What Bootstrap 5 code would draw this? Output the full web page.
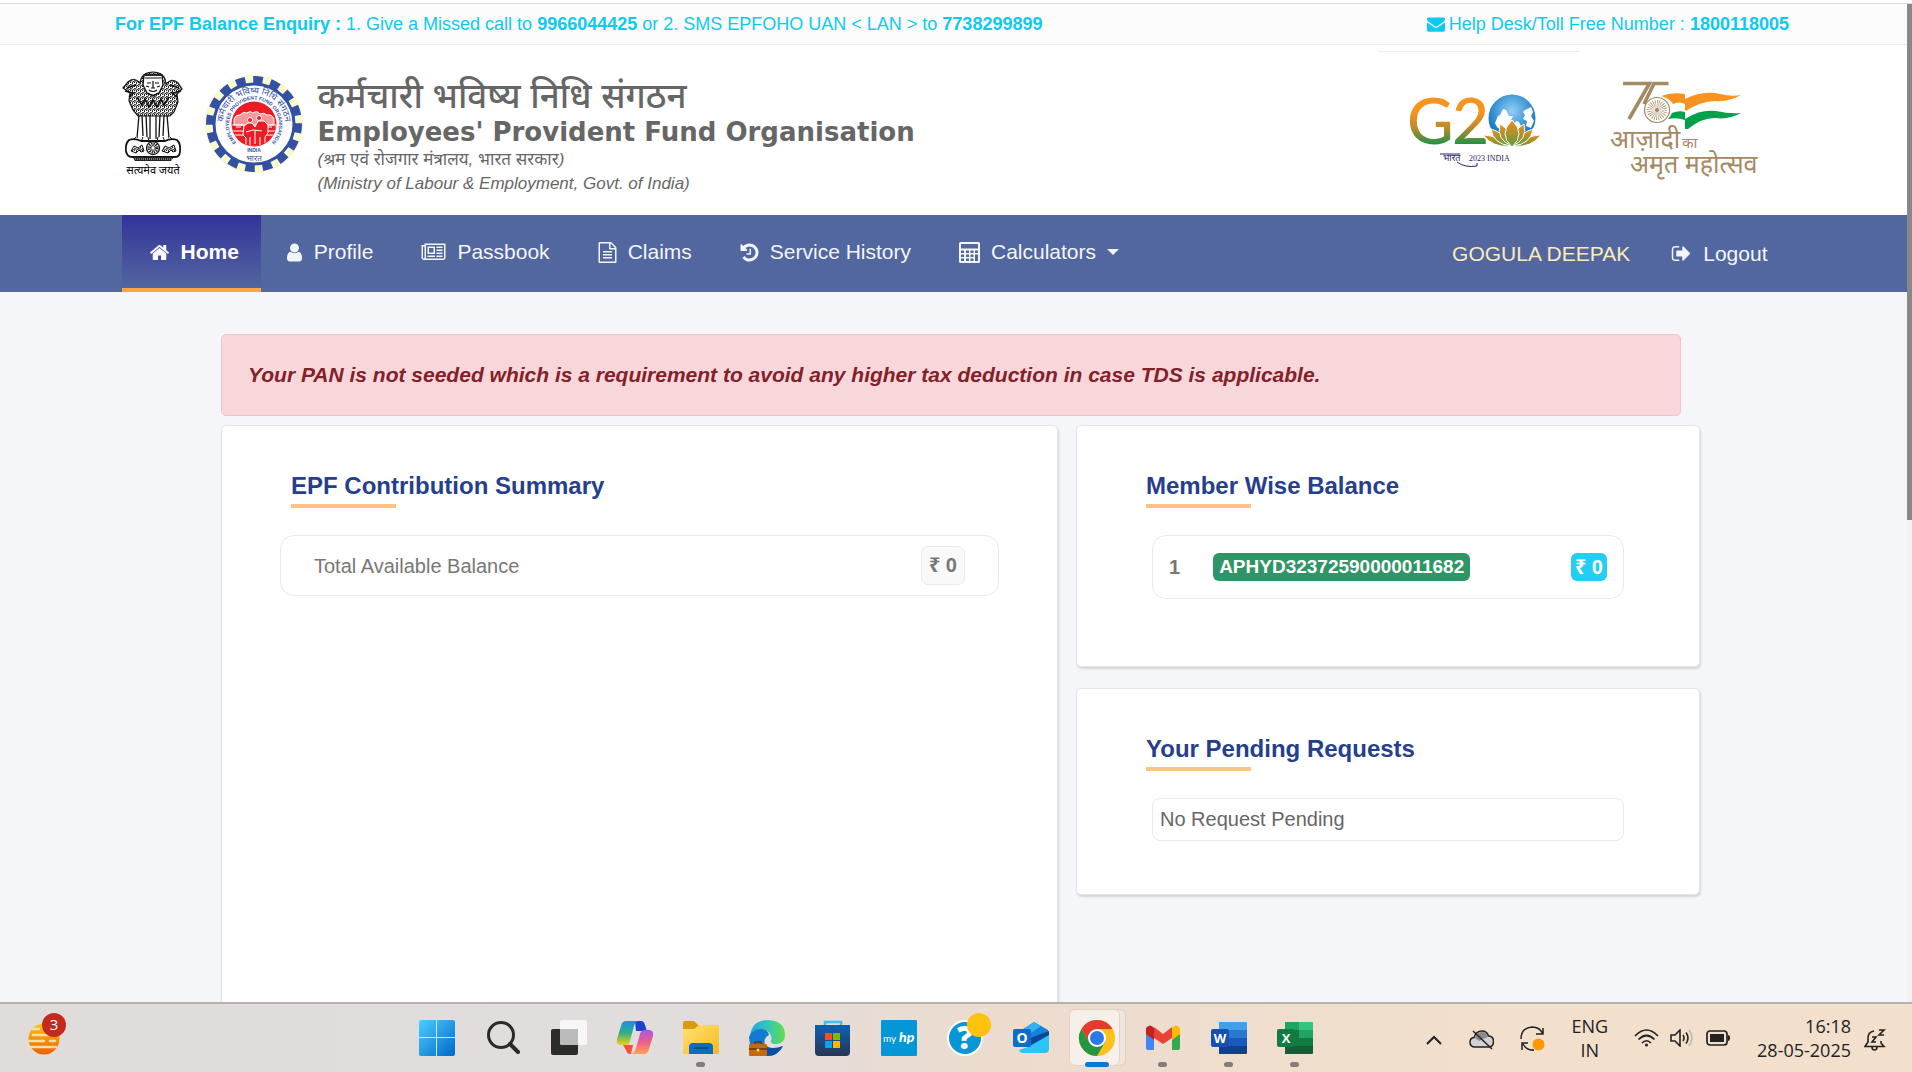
<!DOCTYPE html>
<html lang="en">
<head>
<meta charset="utf-8">
<meta name="viewport" content="width=device-width, initial-scale=1">
<title>EPFO Member Passbook</title>
<link href="https://cdn.jsdelivr.net/npm/bootstrap@5.3.0/dist/css/bootstrap.min.css" rel="stylesheet">
<style>
:root{--ui:"Liberation Sans","Noto Sans",sans-serif}
body{font-family:var(--ui);font-size:20px;color:#666;background:#fff;height:100vh;overflow:hidden}
a{text-decoration:none}
.viewport-area{border-top:1px solid #dcdcdc;margin-top:3px;min-height:0}
.page-body{background:#f5f6fa;min-width:0;overflow:hidden}
.scroll-track{width:5px;background:#f1f1f1;flex:none}
.scroll-thumb{height:516px;background:#888}
.wrap-top{max-width:1677px;padding-right:3px}
.wrap-main{max-width:1664px}
.wrap-cards{max-width:1495px;padding:42px 1px 0 15px}
.strip{background:#fcfcfc;border-bottom:1px solid #ececec;color:#0dcaf0;font-size:18px;line-height:24px;padding:8px 0}
.site-head{background:#fff;height:170px}
.emblem{margin-top:26px}
.gear-logo{margin:30px 15px 0 21px}
.head-titles{padding-top:31px}
.t-hi{font-size:35px;line-height:40px;color:#666;font-weight:500}
.t-en{font-family:"DejaVu Sans",var(--ui);font-weight:700;font-size:26px;line-height:32px;color:#666}
.t-sub{font-size:17px;line-height:24px;font-style:oblique 14deg;color:#666}
.g20-box{width:202px;border-top:1px solid #eee;margin-top:6px;padding:40px 0 0 31px}
.akam-box{width:206px;padding:34px 0 0 28px}
.main-nav{background:#5266a0;font-size:21px}
.main-nav .nav-link{color:#f4f5f9;padding:21px 24px 20px;border-bottom:4px solid transparent;line-height:32px;display:flex;align-items:center;gap:11px}
.main-nav .nav-link.active{color:#fff;font-weight:700;background:linear-gradient(#33339a,#5266a0);border-bottom-color:#fda63f;padding-left:27px;padding-right:22px;margin-right:1px}
.main-nav .nav-link.log-out{padding:0 18px 0 41px;border:0}
.main-nav .dropdown-toggle::after{margin-left:0}
.main-nav svg{fill:currentColor;flex:none}
.user-name{color:#fdebb8}
.notice{font-size:21px;line-height:30px;padding:25px 26px;margin:0 19px 9px 0;color:#842029;background:#f8d7da;border-color:#f5c2c7;border-radius:5px}
.col-main{flex:837 1 0;min-width:0}
.col-side{flex:624 1 0;min-width:0}
.cards-gap{gap:18px}
.stack-gap{gap:21px}
.panel{border:1px solid #e4e5e8;border-radius:5px;box-shadow:1px 2px 2px #d4d6da;background:#fff;padding:42px 69px 0}
.panel-tall{min-height:760px}
.panel-a{min-height:242px}
.panel-b{min-height:207px}
.panel-title{font-size:24px;line-height:36px;font-weight:700;color:#263f8c;margin:0 0 27px}
.panel-title::after{content:"";display:block;width:105px;height:4px;background:#fbc386}
.box-line{border:1px solid #e9e9e9;border-radius:14px;color:#777}
.box-total{margin:0 -11px;padding:0 33px;height:61px}
.box-member{margin:0 6px;padding:0 16px;height:64px}
.box-none{margin:0 6px;padding:0 7px 2px;height:43px;border-radius:8px;color:#666}
.amt{border:1px solid #ebebeb;background:#f9f9f9;border-radius:7px;padding:4px 7px;line-height:29px;color:#777}
.chip{border-radius:6px;line-height:28px;color:#fff}
.chip-id{background:#2f9566;margin-left:33px;font-size:19px;padding:0 6px}
.chip-amt{background:#22cff4;padding:0 4px}
.taskbar{height:70px;border-top:2px solid #b7b1ad;background:linear-gradient(90deg,#e0dcdb 0,#e1dddc 36%,#ecdccf 52%,#f2dfcc 78%,#f2dfcc);color:#222;font-family:"Open Sans","Noto Sans",sans-serif;font-size:18px;line-height:24px}
.tb-left{width:calc(21% + 2px)}
.tb-btn{width:66px;height:68px;border:0;background:none;padding:0;position:relative;display:flex;align-items:center;justify-content:center;flex:none}
.tb-btn svg{overflow:visible}
.tb-run::after{content:"";position:absolute;bottom:5px;width:9px;height:5px;border-radius:3px;background:#857c77}
.tb-on::before{content:"";position:absolute;inset:5px 10px 6px 5px;border-radius:6px;background:#f7efe9;border:1px solid #e3d3c6;box-shadow:6px 0 0 -1px #f1e6dd,6px 0 0 0 #dfd0c4}
.tb-on svg{position:relative}
.tb-on::after{content:"";position:absolute;bottom:5px;width:24px;height:5px;border-radius:3px;background:#0a78d8}
.tray{padding-right:26px;gap:26px}
.tray button{border:0;background:none;padding:0;color:inherit;line-height:24px;display:block}
.status-gap{gap:11px}
.clock-gap{gap:13px}
</style>
</head>
<body class="d-flex flex-column">
<div class="viewport-area flex-grow-1 d-flex">
 <div class="page-body flex-grow-1">
  <div class="strip">
   <div class="wrap-top mx-auto d-flex justify-content-between">
    <div><b>For EPF Balance Enquiry :</b> 1. Give a Missed call to <b>9966044425</b> or 2. SMS EPFOHO UAN &lt; LAN &gt; to <b>7738299899</b></div>
    <div class="d-flex align-items-center gap-1"><svg width="18" height="18" viewBox="0 0 1792 1792" fill="currentColor"><path d="M1792 710v794q0 66-47 113t-113 47h-1472q-66 0-113-47t-47-113v-794q44 49 101 87 362 246 497 345 57 42 92.500 65.500t94.500 48 110 24.500h2q51 0 110-24.500t94.500-48 92.500-65.500q170-123 498-345 57-39 100-87zm0-294q0 79-49 151t-122 123q-376 261-468 325-10 7-42.500 31t-54 38.500-52 32.500-57.500 27-50 9h-2q-23 0-50-9t-57.500-27-52-32.500-54-38.500-42.500-31q-91-64-262-182.500t-205-142.500q-62-42-117-115.500t-55-136.500q0-78 41.500-130t118.500-52h1472q65 0 112.500 47t47.500 113z"/></svg><span>Help Desk/Toll Free Number : <b>1800118005</b></span></div>
   </div>
  </div>

  <header class="site-head">
   <div class="wrap-main mx-auto d-flex">
    <svg class="emblem flex-shrink-0" width="62" height="110" viewBox="0 0 62 110">
     <defs><pattern id="fur" width="4" height="4" patternUnits="userSpaceOnUse"><rect width="4" height="4" fill="#fff"/><path d="M0 1l1 1.500L3 0M2 4l1.500-2L4 3M0 3l1 1" stroke="#111" stroke-width="1" fill="none"/></pattern></defs>
     <path d="M19 8Q22 1 31 1t12 7l1 5q6-7 12-1l4 6-5 5 1 8-4 10-4 4H16l-5-6-4-9 1-8-7-5 5-6q6-6 12 1z" fill="url(#fur)" stroke="#111" stroke-width="1.200"/>
     <path d="M22 4h18l1 10-4 8-6 3-6-3-4-8z" fill="#fff" stroke="#111" stroke-width="1.300"/>
     <path d="M23 4h16M23 7h16M25 12h4M33 12h4M31 10v7M27 19q4 3 8 0M26 22q5 4 10 0M29 17h4M24 15l3 1M38 15l-3 1" stroke="#111" stroke-width="1.200" fill="none"/>
     <path d="M5 17l9-3M3 20l8 2M7 26l6-5M57 17l-9-3M59 20l-8 2M55 26l-6-5M15 26l5 8 3-6 4 8 4-7 4 7 4-8 3 6 5-8" stroke="#111" stroke-width="1.600" fill="none"/>
     <path d="M17 44l-2 23M20 44l1 21M24 44l1 22M28 44v24M34 44v24M38 44l-1 22M42 44l-1 21M45 44l2 23" stroke="#111" stroke-width="1.300"/>
     <path d="M14 66l-3 3 8 1M21 66l-2 5h8l-1-5M36 66l-1 5h8l-2-5M48 66l3 3-8 1" stroke="#111" fill="#fff"/>
     <path d="M7 69Q3 73 4 80q1 6 6 6h43q5 0 5-6 1-7-3-11-6-2-12 1H19q-6-3-12-1z" fill="#fff" stroke="#111" stroke-width="1.800"/>
     <circle cx="31" cy="77" r="6.500" fill="#fff" stroke="#111" stroke-width="1.300"/>
     <circle cx="31" cy="77" r="3.500" fill="none" stroke="#111" stroke-width="4" stroke-dasharray="1 .83"/>
     <path d="M9 80l3-5 4 2 4-3 2 6-3 1-2-2-3 3zM40 80l3-5 4 2 5-3 2 6-3 1-2-2-3 3z" fill="url(#fur)" stroke="#111"/>
     <path d="M10 86h42l-3 4H13z" fill="#222"/><path d="M11 88h40" stroke="#fff" stroke-width=".8" stroke-dasharray="1 1"/>
     <text x="31" y="103" text-anchor="middle" font-size="11" fill="#000" font-family="Noto Sans, sans-serif">सत्यमेव जयते</text>
    </svg>
    <svg class="gear-logo flex-shrink-0" width="98" height="98" viewBox="-49 -49 98 98">
     <defs>
      <path id="arcHi" d="M-29.500 10A31 31 0 1 1 29.500 10"/><path id="arcEn" d="M-17 19A25 25 0 1 1 17 19"/>
      <clipPath id="redDisc"><circle r="22"/></clipPath>
     </defs>
     <circle r="45" fill="none" stroke="#fafad0" stroke-width="8"/>
     <circle r="43.500" fill="none" stroke="#3350a2" stroke-width="9" pathLength="32" stroke-dasharray="1.100 .9" transform="rotate(-1)"/>
     <circle r="40" fill="#fff" stroke="#3350a2" stroke-width="3"/>
     <g fill="#3350a2" font-family="Noto Sans, sans-serif">
      <text font-size="9"><textPath href="#arcHi" startOffset="50%" text-anchor="middle">कर्मचारी भविष्य निधि संगठन</textPath></text>
      <text font-size="5" font-weight="700" font-family="Liberation Sans"><textPath href="#arcEn" startOffset="50%" text-anchor="middle">EMPLOYEES PROVIDENT FUND ORGANISATION</textPath></text>
      <text y="28" text-anchor="middle" font-size="5" font-weight="700" font-family="Liberation Sans">INDIA</text>
      <text y="37" text-anchor="middle" font-size="8">भारत</text>
     </g>
     <circle r="22.500" fill="#ed1c24"/>
     <g clip-path="url(#redDisc)" fill="none" stroke="#fff" stroke-width="1">
      <path d="M-20-5q2-5 6-4 3-4 7-2 3-3 6 0 4-3 7 1 4-2 7 1 5-1 7 4v6H-20z" fill="#fff" fill-opacity=".55"/>
      <path d="M-22 1h12v6h-12M10 1h12v6H10M-22 11h12M10 11h12M-18 3h5M13 3h5"/>
      <path d="M-8 22v-8l-3-3 1-9 4-3h4l3 4 3-6h6l4 4v8l-3 4v10z" fill="#ed1c24"/><path d="M-4 22v-9M1 20V6M6 22v-9M-8 8l7-2 9 1"/>
      <circle cx="-4" cy="-4" r="2.500" fill="#ed1c24"/><circle cx="5" cy="-6" r="2.500" fill="#ed1c24"/>
     </g>
    </svg>
    <div class="head-titles flex-grow-1">
     <div class="t-hi">कर्मचारी भविष्य निधि संगठन</div>
     <div class="t-en">Employees' Provident Fund Organisation</div>
     <div class="t-sub">(श्रम एवं रोजगार मंत्रालय, भारत सरकार)</div>
     <div class="t-sub">(Ministry of Labour &amp; Employment, Govt. of India)</div>
    </div>
    <div class="g20-box flex-shrink-0">
     <svg width="136" height="80" viewBox="0 0 136 80">
      <defs>
       <linearGradient id="g2" gradientUnits="userSpaceOnUse" x1="0" y1="6" x2="0" y2="53"><stop offset=".3" stop-color="#f7941e"/><stop offset=".65" stop-color="#b98a2c"/><stop offset="1" stop-color="#159447"/></linearGradient>
       <linearGradient id="petal" x1="0" y1="0" x2="0" y2="1"><stop stop-color="#f08a1d"/><stop offset="1" stop-color="#5f9a3c"/></linearGradient>
       <radialGradient id="globe" cx=".5" cy=".35" r=".6"><stop stop-color="#8fd0f5"/><stop offset="1" stop-color="#0a72bd"/></radialGradient>
      </defs>
      <text y="52" x="-2 43" font-family="Lato, sans-serif" font-weight="500" font-size="64" fill="url(#g2)">G2</text>
      <circle cx="103" cy="26" r="23.500" fill="url(#globe)"/>
      <g transform="translate(-1)">
      <path d="M87 31l3-7 2-1 3-6 3 1 3 6 4 0-2 4 3 1-3 3-1 5-5-1-4 2-4-3zM105 34l3-5 3 1 3 6-6 4zM117 18l6-3 2 5-2 4 3 5-3 7-5-2 1-5-4-2 2-4-2-3z" fill="#fff"/>
      <g fill="url(#petal)" stroke="#fff" stroke-width="1">
       <path d="M75 43q13 0 27 11-17 2-27-11zM133 43q-13 0-27 11 17 2 27-11z"/>
       <path d="M83 37q12 3 20 17-18-2-20-17zM125 37q-12 3-20 17 18-2 20-17z"/>
       <path d="M92 32q12 7 12 22-16-6-12-22zM116 32q-12 7-12 22 16-6 12-22z"/>
       <path d="M104 28q-14 14 0 27 14-13 0-27z"/>
      </g></g>
      <g fill="#23246e"><text x="34" y="69" font-size="9" font-family="Noto Sans, sans-serif">भारत</text><text x="60" y="69" font-size="8" font-family="Liberation Serif, serif">2023 INDIA</text></g>
      <path d="M31 62h20M48 70q8 6 20 4v-3" fill="none" stroke="#23246e" stroke-width="1"/>
     </svg>
    </div>
    <div class="akam-box flex-shrink-0">
     <svg width="154" height="108" viewBox="0 0 154 108">
      <g stroke="#a38a62" fill="none" transform="translate(3)">
       <path d="M12 4.500h26.500L18 40M57.500 4.500H43L33 25" stroke-width="3.600"/>
       <circle cx="46" cy="31" r="12.500" fill="#fff" stroke-width="1.200"/>
       <circle cx="46" cy="31" r="5.500" stroke-width="9" pathLength="48" stroke-dasharray=".7 1.300"/><circle cx="46" cy="31" r="1.500" fill="#a38a62"/>
      </g>
      <g transform="translate(4)">
      <path d="M49 17q10-4 24-2v10q-6-3-12 0-4-6-12-8z" fill="#f7931e"/>
      <path d="M73 20q18-9 35-5 12 3 21 1-12 7-26 6-14 0-29 10l-1-1z" fill="#f7931e"/>
      <path d="M60 34q7-3 13-1v8q-8-3-17-1 3-3 4-6z" fill="#00a14b"/>
      <path d="M73 40q15-10 31-8 14 3 25 2-12 7-26 5-14 0-27 11l-3 0z" fill="#00a14b"/>
      </g>
      <g fill="#a38a62" font-family="Noto Sans, sans-serif"><text x="2" y="69" font-size="25">आज़ादी</text><text x="74" y="69" font-size="15">का</text><text x="22" y="94" font-size="25">अमृत महोत्सव</text></g>
     </svg>
    </div>
   </div>
  </header>

  <nav class="main-nav">
   <div class="wrap-main mx-auto d-flex justify-content-between align-items-center">
    <div class="nav">
     <a class="nav-link active" href="#"><svg width="21" height="21" viewBox="0 0 1792 1792"><path d="M1472 992v480q0 26-19 45t-45 19h-384v-384h-256v384h-384q-26 0-45-19t-19-45v-480q0-1 .5-3t.5-3l575-474 575 474q1 2 1 6zm223-69l-62 74q-8 9-21 11h-3q-13 0-21-7l-692-577-692 577q-12 8-24 7-13-2-21-11l-62-74q-8-10-7-23.500t11-21.500l719-599q32-26 76-26t76 26l244 204v-195q0-14 9-23t23-9h192q14 0 23 9t9 23v408l219 182q10 8 11 21.500t-7 23.500z"/></svg>Home</a>
     <a class="nav-link" href="#"><svg width="17" height="21" viewBox="200 0 1392 1792"><path d="M1536 1399q0 109-62.500 187t-150.500 78h-854q-88 0-150.500-78t-62.500-187q0-85 8.500-160.500t31.500-152 58.500-131 94-89 134.500-34.500q131 128 313 128t313-128q76 0 134.500 34.500t94 89 58.500 131 31.500 152 8.500 160.500zm-256-887q0 159-112.500 271.500t-271.500 112.500-271.500-112.500-112.500-271.500 112.500-271.500 271.500-112.500 271.500 112.500 112.500 271.500z"/></svg>Profile</a>
     <a class="nav-link" href="#"><svg width="25" height="21" viewBox="0 0 2048 1792"><path d="M1024 512h-384v384h384v-384zm128 640v128h-640v-128h640zm0-768v640h-640v-640h640zm640 768v128h-512v-128h512zm0-256v128h-512v-128h512zm0-256v128h-512v-128h512zm0-256v128h-512v-128h512zm-1536 960v-960h-128v960q0 26 19 45t45 19 45-19 19-45zm1664 0v-1088h-1536v1088q0 33-11 64h1483q26 0 45-19t19-45zm128-1216v1216q0 80-56 136t-136 56h-1664q-80 0-136-56t-56-136v-1088h256v-128h1792z"/></svg>Passbook</a>
     <a class="nav-link" href="#"><svg width="19" height="21" viewBox="128 0 1536 1792"><path d="M1596 380q28 28 48 76t20 88v1152q0 40-28 68t-68 28h-1344q-40 0-68-28t-28-68v-1600q0-40 28-68t68-28h896q40 0 88 20t76 48zm-444-244v376h376q-10-29-22-41l-313-313q-12-12-41-22zm384 1528v-1024h-416q-40 0-68-28t-28-68v-416h-768v1536h1280zm-1024-864q0-14 9-23t23-9h704q14 0 23 9t9 23v64q0 14-9 23t-23 9h-704q-14 0-23-9t-9-23v-64zm736 224q14 0 23 9t9 23v64q0 14-9 23t-23 9h-704q-14 0-23-9t-9-23v-64q0-14 9-23t23-9h704zm0 256q14 0 23 9t9 23v64q0 14-9 23t-23 9h-704q-14 0-23-9t-9-23v-64q0-14 9-23t23-9h704z"/></svg>Claims</a>
     <a class="nav-link" href="#"><svg width="19" height="21" viewBox="128 0 1536 1792"><path d="M1664 896q0 156-61 298t-164 245-245 164-298 61q-172 0-327-72.500t-264-204.500q-7-10-6.500-22.500t8.500-20.500l137-138q10-9 25-9 16 2 23 12 73 95 179 147t225 52q104 0 198.500-40.500t163.500-109.500 109.500-163.500 40.500-198.500-40.500-198.500-109.500-163.500-163.500-109.500-198.500-40.500q-98 0-188 35.500t-160 101.500l137 138q31 30 14 69-17 40-59 40h-448q-26 0-45-19t-19-45v-448q0-42 40-59 39-17 69 14l130 129q107-101 244.500-156.500t284.500-55.500q156 0 298 61t245 164 164 245 61 298zm-640-288v448q0 14-9 23t-23 9h-320q-14 0-23-9t-9-23v-64q0-14 9-23t23-9h224v-352q0-14 9-23t23-9h64q14 0 23 9t9 23z"/></svg>Service History</a>
     <a class="nav-link dropdown-toggle" href="#" data-bs-toggle="dropdown"><svg width="21" height="21" viewBox="0 0 21 21"><path fill-rule="evenodd" d="M1.500 0h18Q21 0 21 1.500v18q0 1.500-1.500 1.500h-18Q0 21 0 19.500v-18Q0 0 1.500 0zM2 2v4.500h17V2zM2 8.500v2.500h3V8.500zM7 8.500v2.500h3V8.500zM11.500 8.500v2.500h3V8.500zM16 8.500v2.500h3V8.500zM2 12.500V15h3v-2.500zM7 12.500V15h3v-2.500zM11.500 12.500V15h3v-2.500zM2 16.500V19h3v-2.500zM7 16.500V19h3v-2.500zM11.500 16.500V19h3v-2.500zM16 12.500V19h3v-6.500z"/></svg>Calculators</a>
    </div>
    <div class="d-flex align-items-center">
     <a class="user-name" href="#">GOGULA DEEPAK</a>
     <a class="nav-link log-out" href="#"><svg width="21" height="21" viewBox="0 0 1792 1792"><path d="M704 1440q0 4 1 20t.5 26.500-3 23.500-10 19.500-20.500 6.500h-320q-119 0-203.500-84.500t-84.500-203.500v-704q0-119 84.500-203.500t203.500-84.500h320q13 0 22.500 9.500t9.500 22.500q0 4 1 20t.5 26.500-3 23.500-10 19.500-20.500 6.500h-320q-66 0-113 47t-47 113v704q0 66 47 113t113 47h312l11.500 1 11.500 3 8 5.500 7 9 2 13.500zm928-544q0 26-19 45l-544 544q-19 19-45 19t-45-19-19-45v-288h-448q-26 0-45-19t-19-45v-384q0-26 19-45t45-19h448v-288q0-26 19-45t45-19 45 19l544 544q19 19 19 45z"/></svg>Logout</a>
    </div>
   </div>
  </nav>

  <main class="wrap-cards mx-auto">
   <div class="alert notice fw-bold fst-italic" role="alert">Your PAN is not seeded which is a requirement to avoid any higher tax deduction in case TDS is applicable.</div>
   <div class="cards-gap d-flex">
    <div class="col-main">
     <section class="panel panel-tall">
      <h2 class="panel-title">EPF Contribution Summary</h2>
      <div class="box-line box-total d-flex justify-content-between align-items-center"><span>Total Available Balance</span><b class="amt">₹ 0</b></div>
     </section>
    </div>
    <div class="col-side stack-gap d-flex flex-column">
     <section class="panel panel-a">
      <h2 class="panel-title">Member Wise Balance</h2>
      <div class="box-line box-member d-flex align-items-center"><b>1</b><b class="chip chip-id">APHYD32372590000011682</b><b class="chip chip-amt ms-auto">₹ 0</b></div>
     </section>
     <section class="panel panel-b">
      <h2 class="panel-title">Your Pending Requests</h2>
      <div class="box-line box-none d-flex align-items-center">No Request Pending</div>
     </section>
    </div>
   </div>
  </main>
 </div>
 <div class="scroll-track"><div class="scroll-thumb"></div></div>
</div>

<footer class="taskbar flex-shrink-0 d-flex align-items-center">
 <div class="tb-left ps-2">
  <button class="tb-btn" aria-label="Widgets"><svg width="44" height="44" viewBox="0 0 44 44"><defs><linearGradient id="sun" x1="0" y1="0" x2="0" y2="1"><stop stop-color="#fdc50e"/><stop offset="1" stop-color="#e96008"/></linearGradient></defs><circle cx="25" cy="23" r="15.500" fill="url(#sun)"/><path d="M14 13h6M14 19h20M9 25h16M31 25h5M9 31h28" stroke="#f5dfa6" stroke-width="2.600" stroke-linecap="round"/><circle cx="35" cy="9" r="12" fill="#c42b1c"/><text x="35" y="14" text-anchor="middle" font-size="15" fill="#fff" font-family="Open Sans">3</text></svg></button>
 </div>
 <div class="d-flex">
  <button class="tb-btn" aria-label="Start"><svg width="36" height="36" viewBox="0 0 36 36"><defs><linearGradient id="win" x1="0" y1="0" x2="1" y2="1"><stop stop-color="#4cd0ff"/><stop offset="1" stop-color="#0067c8"/></linearGradient></defs><path fill="url(#win)" d="M2 0h15v17H0V2q0-2 2-2zM18 0h16q2 0 2 2v15H18zM0 18h17v18H2q-2 0-2-2zM18 18h18v16q0 2-2 2H18z"/></svg></button>
  <button class="tb-btn" aria-label="Search"><svg width="36" height="36" viewBox="0 0 36 36" fill="none" stroke="#2a2a2a"><circle cx="16" cy="15" r="12.500" stroke-width="3"/><path d="M25 24l8 8" stroke-width="4" stroke-linecap="round"/></svg></button>
  <button class="tb-btn" aria-label="Task view"><svg width="36" height="36" viewBox="0 0 36 36"><rect x="0" y="9" width="27" height="26" rx="2" fill="#2c2c2b"/><rect x="9" y="0" width="27" height="25" rx="2" fill="#f7f7f7"/><path d="M9 9h18v16H11q-2 0-2-2z" fill="#bdbbba"/></svg></button>
  <button class="tb-btn" aria-label="Copilot"><svg width="36" height="34" viewBox="0 0 36 34"><defs><linearGradient id="cpA" x1="0" y1="0" x2="0" y2="1"><stop stop-color="#1a8df0"/><stop offset=".5" stop-color="#35ad7c"/><stop offset="1" stop-color="#f5d21a"/></linearGradient><linearGradient id="cpB" x1="0" y1="0" x2="0" y2="1"><stop stop-color="#a954e4"/><stop offset=".5" stop-color="#ee5d90"/><stop offset="1" stop-color="#ffa350"/></linearGradient></defs><path d="M18 0h6q3 0 4 4l2 6H19z" fill="#1c42cf"/><path d="M6 24h10l-2 9h-1q-3 0-4-4z" fill="#f0503c"/><path d="M9 0h12q-3 1-4 5l-4 15q-1 5-5 4H4q-5 0-4-6L4 5q1-5 5-5z" fill="url(#cpA)"/><path d="M27 33H14q4-1 5-6l4-14q1-4 5-4h4q5 0 4 6l-4 13q-1 5-5 5z" fill="url(#cpB)"/></svg></button>
  <button class="tb-btn tb-run" aria-label="File Explorer"><svg width="36" height="34" viewBox="0 0 36 34"><defs><linearGradient id="fold" x1="0" y1="0" x2="1" y2="1"><stop stop-color="#ffe177"/><stop offset="1" stop-color="#f8b91c"/></linearGradient></defs><path d="M0 2q0-2 2-2h9l4 4h20v8H0z" fill="#dc9a10"/><path d="M0 8h11l5-4h18q2 0 2 2v26q0 1-1 1H1q-1 0-1-1z" fill="url(#fold)"/><path d="M6 33v-7q0-4 4-4h16q4 0 4 4v7z" fill="#0b6cc0"/><path d="M11 27h14" stroke="#0a4c8c" stroke-width="2"/></svg></button>
  <button class="tb-btn" aria-label="Edge"><svg width="36" height="36" viewBox="0 0 36 36"><defs><linearGradient id="edA"><stop stop-color="#22a5e8"/><stop offset=".5" stop-color="#35c6b8"/><stop offset="1" stop-color="#62dd4a"/></linearGradient></defs><path d="M1 16Q3 0 19 0q17 1 17 15 0 8-8 9-7 0-6-3 2-6-4-10Q8 6 1 16z" fill="url(#edA)"/><path d="M0 17q4-9 13-8 6 1 7 6-6 3-4 10 4 6 12 4l6-3q-5 10-16 10Q1 35 0 17z" fill="#1479d0"/><path d="M16 24q4 7 18 2-5 10-16 10z" fill="#0c4fa0"/><rect y="24" width="18" height="12" rx="1" fill="#c26a10"/><path d="M0 29h18M6 24v-2h6v2" stroke="#6c3405" fill="none" stroke-width="1.500"/><circle cx="9" cy="30" r="1.500" fill="#ffd84d"/></svg></button>
  <button class="tb-btn" aria-label="Store"><svg width="36" height="36" viewBox="0 0 36 36"><defs><linearGradient id="st" x1="0" y1="0" x2="0" y2="1"><stop stop-color="#0c62b0"/><stop offset="1" stop-color="#2a3455"/></linearGradient></defs><path d="M10 7V2h16v5" fill="none" stroke="#35c3f2" stroke-width="2.500"/><path d="M0 5h35v27q0 4-4 4H4q-4 0-4-4z" fill="url(#st)"/><path d="M10 13h7v7h-7z" fill="#f25022"/><path d="M18 13h7v7h-7z" fill="#7fba00"/><path d="M10 21h7v7h-7z" fill="#00a4ef"/><path d="M18 21h7v7h-7z" fill="#ffb900"/></svg></button>
  <button class="tb-btn" aria-label="myHP"><svg width="36" height="36" viewBox="0 0 36 36"><rect width="36" height="36" rx="1" fill="#0496d6"/><text x="2" y="22" font-size="10" fill="#fff" font-family="Lato">my</text><text x="18" y="22" font-size="14" font-weight="900" font-style="italic" fill="#fff" font-family="Lato">hp</text></svg></button>
  <button class="tb-btn" aria-label="Help"><svg width="36" height="36" viewBox="0 0 36 36"><circle cx="18" cy="18" r="17" fill="#0896d6" stroke="#fff" stroke-width="2"/><text x="18" y="29" text-anchor="middle" font-size="32" font-weight="800" fill="#fff" font-family="Open Sans">?</text><circle cx="32" cy="5" r="12" fill="#ffc20e"/></svg></button>
  <button class="tb-btn" aria-label="Outlook"><svg width="36" height="32" viewBox="0 0 36 32"><path d="M7 9L21 0l14 8v6L15 25z" fill="#1483dd"/><path d="M12 6l9-6 7 4-16 11z" fill="#33b3ee"/><path d="M36 9v8L16 24l-4-6z" fill="#0a4798"/><path d="M36 13v14q0 4-4 4H10q-3 0-4-3l9-3z" fill="#2cc5f8"/><rect y="7" width="18" height="18" rx="2" fill="#0c6dca"/><text x="9" y="21" text-anchor="middle" font-size="14" font-weight="700" fill="#fff" font-family="Open Sans">O</text></svg></button>
  <button class="tb-btn tb-on" aria-label="Chrome"><svg width="36" height="36" viewBox="0 0 36 36"><circle cx="18" cy="18" r="18" fill="#fcc21b"/><path d="M18 18V9h15.600A18 18 0 0 0 2.400 9l7.800 13.500z" fill="#e33b2e"/><path d="M2.400 9A18 18 0 0 0 18 36l7.800-13.500L18 20l-7.800 2.500z" fill="#259541"/><circle cx="18" cy="18" r="9" fill="#fff"/><circle cx="18" cy="18" r="7" fill="#2c78ea"/></svg></button>
  <button class="tb-btn tb-run" aria-label="Gmail"><svg width="34" height="26" viewBox="0 0 34 26"><path d="M0 5h8v20H2q-2 0-2-2z" fill="#4285f4"/><path d="M26 5h8v18q0 2-2 2h-6z" fill="#34a853"/><path d="M26 3q4-5 8 0v6l-8 6z" fill="#fbbc04"/><path d="M0 3q4-5 8 0v12L0 9z" fill="#c5221f"/><path d="M8 2l9 7 9-7v11l-9 6-9-6z" fill="#ea4335"/></svg></button>
  <button class="tb-btn tb-run" aria-label="Word"><svg width="36" height="32" viewBox="0 0 36 32"><path d="M8 0h27q1 0 1 1v7H8z" fill="#41a0ea"/><path d="M8 8h28v8H8z" fill="#2a78d0"/><path d="M8 16h28v8H8z" fill="#185abd"/><path d="M8 24h28v7q0 1-1 1H8z" fill="#123f8e"/><rect y="7" width="18" height="18" rx="2" fill="#1650b0"/><text x="9" y="21" text-anchor="middle" font-size="13" font-weight="700" fill="#fff" font-family="Open Sans">W</text></svg></button>
  <button class="tb-btn tb-run" aria-label="Excel"><svg width="36" height="32" viewBox="0 0 36 32"><path d="M8 0h14v8H8z" fill="#21a366"/><path d="M22 0h13q1 0 1 1v7H22z" fill="#33c481"/><path d="M8 8h14v8H8z" fill="#107c41"/><path d="M22 8h14v8H22z" fill="#21a366"/><path d="M8 16h28v8H8z" fill="#107c41"/><path d="M8 24h28v7q0 1-1 1H8z" fill="#185c37"/><rect y="7" width="18" height="18" rx="2" fill="#107c41"/><text x="9" y="21" text-anchor="middle" font-size="13" font-weight="700" fill="#fff" font-family="Open Sans">X</text></svg></button>
 </div>
 <div class="tray ms-auto d-flex align-items-center">
  <button aria-label="Show hidden icons"><svg width="18" height="12" viewBox="0 0 18 12" fill="none" stroke="#222" stroke-width="2"><path d="M2 10l7-7 7 7"/></svg></button>
  <button aria-label="OneDrive"><svg width="25" height="20" viewBox="0 0 25 20"><path d="M6 17q-5 0-5-5 0-4 4-4.500Q7 1 13 1q5 0 6.500 5 5 0 5 5.500 0 5.500-5 5.500z" fill="#d2d2d2" stroke="#222" stroke-width="1.500"/><path d="M6 8q1-6 7-6 4 0 6 5l-5 2-4 2z" fill="#8a8a8a"/><path d="M4 1l19 18" stroke="#222" stroke-width="1.500"/></svg></button>
  <button aria-label="Update"><svg width="25" height="25" viewBox="0 0 25 25" fill="none" stroke="#222" stroke-width="1.500"><path d="M1 13Q1 2 12 1q8 0 11 7M23 2v6h-7M2 24v-7h6M3 18q4 7 11 6"/><circle cx="18.500" cy="18.500" r="6" fill="#ff9800" stroke="none"/></svg></button>
  <button class="text-center" aria-label="Language">ENG<br>IN</button>
  <button class="status-gap d-flex" aria-label="Network, volume, battery"><svg width="25" height="18" viewBox="0 0 25 18" fill="none" stroke="#222" stroke-width="1.700"><path d="M1 7q11.500-12 23 0M4.500 10.500q8-8 16 0M8 14q4.500-4.500 9 0"/><circle cx="12.500" cy="16" r="1.500" fill="#222" stroke="none"/></svg><svg width="25" height="18" viewBox="0 0 25 18" fill="none" stroke="#222" stroke-width="1.600"><path d="M1 6h4l5-5v16l-5-5H1zM13 6q2 3 0 6M16 3.500q4 5.500 0 11"/><path d="M19 1q6 8 0 16" stroke="#c4b5a8"/></svg><svg width="25" height="18" viewBox="0 0 25 18"><rect x="1" y="2" width="20" height="14" rx="3" fill="none" stroke="#222" stroke-width="1.700"/><rect x="4" y="5" width="14" height="8" fill="#222"/><path d="M22 6q2 0 2 3t-2 3z" fill="#222"/></svg></button>
  <div class="clock-gap d-flex align-items-center">
   <button class="text-end" aria-label="Clock">16:18<br>28-05-2025</button>
   <button aria-label="Notifications"><svg width="22" height="22" viewBox="0 0 22 22" fill="none" stroke="#222" stroke-width="1.600"><path d="M10 2Q4 3 4 9v4l-3 4.500h19L17 14v-2M8 18q0 3 2.500 3t2.500-3M15 1h5l-5 5h5M8 8h4l-4 5h4"/></svg></button>
  </div>
 </div>
</footer>
<script src="https://cdn.jsdelivr.net/npm/bootstrap@5.3.0/dist/js/bootstrap.bundle.min.js"></script>
</body>
</html>
